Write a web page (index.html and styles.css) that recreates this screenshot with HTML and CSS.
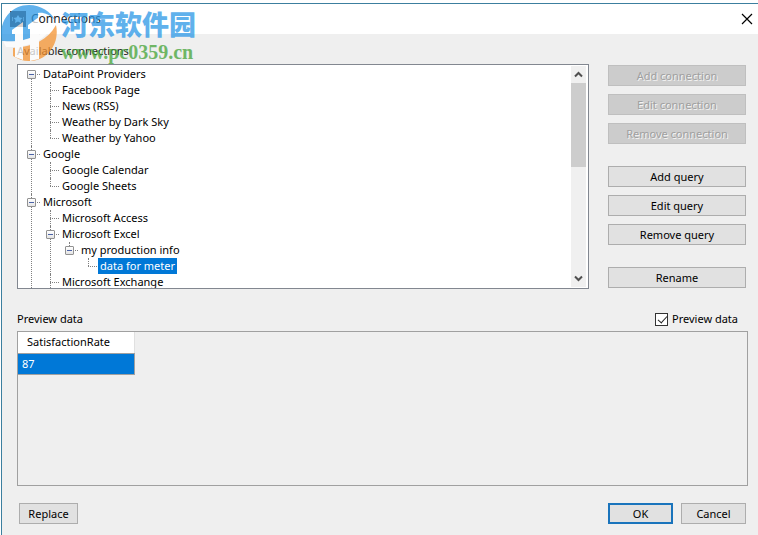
FILE: index.html
```html
<!DOCTYPE html>
<html lang="en">
<head>
    <meta charset="UTF-8">
    <meta name="viewport" content="width=device-width, initial-scale=1.0">
    <title>Connections</title>
    <link rel="stylesheet" href="styles.css">
</head>
<body>

    <div class="window">
        <!-- Title bar -->
        <div class="title-bar">
            <svg class="app-icon" viewBox="0 0 16 16">
                <rect width="16" height="16" fill="#6b4636"/>
                <path d="M8 4l1.500 2.500L12.500 7l-2 2 .5 3L8 10.500 5 12l.5-3-2-2 3-.5z" fill="#fff"/>
                <path d="M2.500 6v4M13.500 6v4" stroke="#d8c8c0"/>
            </svg>
            <span class="title">Connections</span>
            <button class="close-button" aria-label="Close">
                <svg width="12" height="12" viewBox="0 0 12 12">
                    <path d="M1 1l10 10M11 1L1 11" stroke="#000" stroke-width="1.2" fill="none"/>
                </svg>
            </button>
        </div>

        <div class="content">
            <div class="label">Available connections</div>

            <div class="connections">
                <!-- Tree of connections -->
                <div class="tree-box">
                    <ul class="tree">
                        <li>
                            <button class="toggle" aria-label="Collapse"></button><span class="node">DataPoint Providers</span>
                            <ul>
                                <li><span class="node">Facebook Page</span></li>
                                <li><span class="node">News (RSS)</span></li>
                                <li><span class="node">Weather by Dark Sky</span></li>
                                <li><span class="node">Weather by Yahoo</span></li>
                            </ul>
                        </li>
                        <li>
                            <button class="toggle" aria-label="Collapse"></button><span class="node">Google</span>
                            <ul>
                                <li><span class="node">Google Calendar</span></li>
                                <li><span class="node">Google Sheets</span></li>
                            </ul>
                        </li>
                        <li class="continues">
                            <button class="toggle" aria-label="Collapse"></button><span class="node">Microsoft</span>
                            <ul>
                                <li><span class="node">Microsoft Access</span></li>
                                <li>
                                    <button class="toggle" aria-label="Collapse"></button><span class="node">Microsoft Excel</span>
                                    <ul>
                                        <li>
                                            <button class="toggle" aria-label="Collapse"></button><span class="node">my production info</span>
                                            <ul>
                                                <li><span class="node selected">data for meter</span></li>
                                            </ul>
                                        </li>
                                    </ul>
                                </li>
                                <li class="continues"><span class="node">Microsoft Exchange</span></li>
                            </ul>
                        </li>
                    </ul>
                    <div class="scrollbar">
                        <button class="scroll-button" aria-label="Scroll up">
                            <svg width="9" height="7" viewBox="0 0 9 7"><path d="M1 5.5L4.5 2L8 5.5" stroke="#505050" stroke-width="2" fill="none"/></svg>
                        </button>
                        <div class="thumb"></div>
                        <button class="scroll-button" aria-label="Scroll down">
                            <svg width="9" height="7" viewBox="0 0 9 7"><path d="M1 1.5L4.5 5L8 1.5" stroke="#505050" stroke-width="2" fill="none"/></svg>
                        </button>
                    </div>
                </div>

                <div class="actions">
                    <div class="action-group">
                        <button class="btn" disabled>Add connection</button>
                        <button class="btn" disabled>Edit connection</button>
                        <button class="btn" disabled>Remove connection</button>
                    </div>
                    <div class="action-group">
                        <button class="btn">Add query</button>
                        <button class="btn">Edit query</button>
                        <button class="btn">Remove query</button>
                    </div>
                    <button class="btn">Rename</button>
                </div>
            </div>

            <!-- Preview -->
            <div class="preview-header">
                <span>Preview data</span>
                <label class="check" for="preview">
                    <input type="checkbox" id="preview" checked>
                    Preview data
                </label>
            </div>
            <div class="preview">
                <table>
                    <thead>
                        <tr><th>SatisfactionRate</th></tr>
                    </thead>
                    <tbody>
                        <tr><td>87</td></tr>
                    </tbody>
                </table>
            </div>

            <div class="footer">
                <button class="btn replace">Replace</button>
                <div class="footer-right">
                    <button class="btn default">OK</button>
                    <button class="btn">Cancel</button>
                </div>
            </div>
        </div>
    </div>

    <!-- Site watermark -->
    <div class="watermark">
        <svg width="57" height="58" viewBox="0 0 57 58">
            <path d="M1 37C-3 18 9 1 28 1C40 1 50 8 54 16C48 10 42 8 37 9V30C27 36 14 39 1 37Z" fill="#2b98e6"/>
            <path d="M55 21C59 39 47 57 28 57C22 57 17 55 12 52V44C32 43 47 36 55 21Z" fill="#f59331"/>
            <path d="M11 26L22 18V56L14 53V30H11ZM27 21L38 13V55L29 57V25H27Z" fill="#fff"/>
            <path d="M2 37C24 40 43 31 54 18C47 35 29 44 5 43Z" fill="#fff"/>
        </svg>
        <div class="watermark-text">
            <div class="site-name" lang="zh">河东软件园</div>
            <div class="site-url">www.pc0359.cn</div>
        </div>
    </div>

</body>
</html>
```
FILE: styles.css
```css
* {
    box-sizing: border-box;
}

body {
    margin: 0;
    padding: 3px 0 0 1px;
    min-height: 100vh;
    display: flex;
    background-color: #fff;
    font-family: "Noto Sans", "Open Sans", sans-serif;
    font-size: 11px;
    line-height: 16px;
    color: #000;
}

button {
    font: inherit;
    color: inherit;
    padding: 0;
}

.window {
    flex: 1;
    display: flex;
    flex-direction: column;
    background-color: #efefef;
    border-top: 1px solid #3c7f9f;
    border-left: 1px solid #3c7f9f;
}

/* title bar */
.title-bar {
    height: 30px;
    display: flex;
    align-items: center;
    padding: 0 4px 0 8px;
    background-color: #fff;
}

.app-icon {
    width: 16px;
    height: 16px;
}

.title {
    flex: 1;
    padding-left: 5px;
    font-size: 12px;
    color: #222;
}

.close-button {
    width: 14px;
    height: 20px;
    display: flex;
    align-items: center;
    justify-content: center;
    border: none;
    background: none;
}

.content {
    padding: 9px 12px 8px 15px;
}

.label {
    height: 21px;
    color: #222;
}

/* connections */
.connections {
    display: flex;
    gap: 19px;
}

.tree-box {
    flex: 1;
    height: 225px;
    display: flex;
    padding: 1px 2px 0 4px;
    background-color: #fff;
    border: 1px solid #828790;
    overflow: hidden;
}

.tree,
.tree ul {
    margin: 0;
    padding: 0;
    list-style: none;
}

.tree {
    flex: 1;
}

.tree li {
    position: relative;
    padding-left: 19px;
}

/* dotted guide lines */
.tree li::before {
    content: "";
    position: absolute;
    left: 9px;
    top: 0;
    bottom: 0;
    border-left: 1px dotted #808080;
}

.tree li::after {
    content: "";
    position: absolute;
    left: 9px;
    top: 8px;
    width: 9px;
    border-top: 1px dotted #808080;
}

.tree > li:first-child::before {
    top: 8px;
}

.tree li:last-child:not(.continues)::before {
    bottom: auto;
    height: 8px;
}

.node {
    display: block;
    width: max-content;
    height: 16px;
    padding: 0 2px;
}

.node.selected {
    background-color: #0078d7;
    color: #fff;
}

.toggle {
    position: absolute;
    left: 5px;
    top: 4px;
    z-index: 1;
    width: 9px;
    height: 9px;
    border: 1px solid #919191;
    border-radius: 1px;
    background: linear-gradient(#4b63a7, #4b63a7) center / 5px 1px no-repeat, linear-gradient(#fff, #e4e4e4);
}

.scrollbar {
    width: 15px;
    display: flex;
    flex-direction: column;
    margin-bottom: 1px;
    background-color: #f0f0f0;
}

.scroll-button {
    height: 17px;
    display: flex;
    align-items: center;
    justify-content: center;
    border: none;
    background: none;
}

.thumb {
    height: 84px;
    margin-bottom: auto;
    background-color: #cdcdcd;
}

/* buttons */
.actions {
    width: 138px;
    display: flex;
    flex-direction: column;
    gap: 22px;
    padding-top: 1px;
}

.action-group {
    display: flex;
    flex-direction: column;
    gap: 8px;
}

.btn {
    height: 21px;
    line-height: 18px;
    border: 1px solid #adadad;
    background-color: #e1e1e1;
}

.btn:disabled {
    border-color: #bfbfbf;
    background-color: #cccccc;
    color: #a0a0a0;
    text-shadow: 1px 1px 0 #f4f4f4;
}

.btn.default {
    border: 2px solid #1a74bc;
    line-height: 16px;
}

/* preview */
.preview-header {
    display: flex;
    justify-content: space-between;
    align-items: center;
    padding: 22px 8px 4px 0;
}

.check {
    display: flex;
    align-items: center;
    gap: 4px;
}

.check input {
    appearance: none;
    width: 13px;
    height: 13px;
    margin: 0;
    position: relative;
    border: 1px solid #333;
    background-color: #fff;
}

.check input:checked::after {
    content: "";
    position: absolute;
    left: 4px;
    top: 0;
    width: 4px;
    height: 8px;
    border: solid #222;
    border-width: 0 1px 1px 0;
    transform: rotate(42deg);
}

.preview {
    height: 155px;
    margin-right: -2px;
    border: 1px solid #a0a0a0;
}

.preview table {
    border-collapse: collapse;
}

.preview th,
.preview td {
    width: 116px;
    height: 21px;
    padding: 0 4px;
    border: 1px solid #a0a0a0;
    border-width: 0 1px 1px 0;
    text-align: left;
    font-weight: normal;
}

.preview th {
    padding-left: 9px;
    background-color: #fff;
    border-right-color: #e0e0e0;
}

.preview td {
    background-color: #0078d7;
    color: #fff;
}

.footer {
    display: flex;
    justify-content: space-between;
    padding: 17px 0 0 2px;
}

.footer-right {
    display: flex;
    gap: 8px;
}

.footer .btn {
    width: 65px;
}

.footer .replace {
    width: 59px;
}

/* watermark */
.watermark {
    position: absolute;
    left: 1px;
    top: 4px;
    display: flex;
    gap: 3px;
    opacity: 0.75;
    pointer-events: none;
}

.watermark-text {
    padding-top: 5px;
}

.site-name {
    font-family: "Noto Sans CJK SC", sans-serif;
    font-size: 27px;
    font-weight: 900;
    line-height: 30px;
    color: #2b98e6;
}

.site-url {
    padding-top: 3px;
    font-family: "Liberation Serif", serif;
    font-size: 20px;
    font-weight: bold;
    line-height: 20px;
    color: #45a438;
}
```
